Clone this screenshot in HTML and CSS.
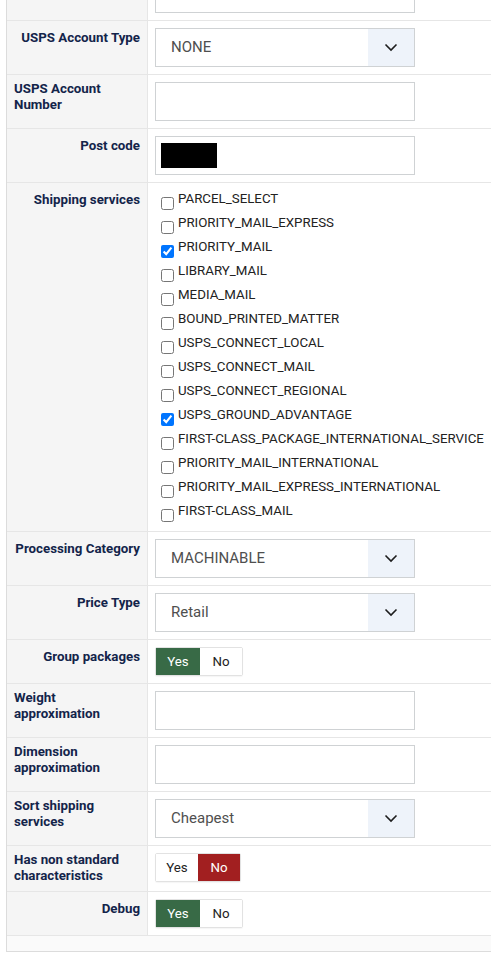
FILE: index.html
```html
<!DOCTYPE html>
<html>
<head>
<meta charset="utf-8">
<link rel="stylesheet" href="styles.css">
</head>
<body>
<div class="panel">
  <div class="row">
    <div class="lbl"></div>
    <div class="val"><div class="input"></div></div>
  </div>
  <div class="row">
    <div class="lbl"><label>USPS Account Type</label></div>
    <div class="val"><div class="select"><span class="sel-text">NONE</span><span class="sel-btn"><svg width="14" height="9" viewBox="0 0 14 9"><path d="M1.5 1.5 L7 7 L12.5 1.5" fill="none" stroke="#1d1d1d" stroke-width="1.6"/></svg></span></div></div>
  </div>
  <div class="row">
    <div class="lbl"><label>USPS Account Number</label></div>
    <div class="val"><div class="input"></div></div>
  </div>
  <div class="row">
    <div class="lbl"><label>Post code</label></div>
    <div class="val"><div class="input"><span class="redact"></span></div></div>
  </div>
  <div class="row">
    <div class="lbl"><label>Shipping services</label></div>
    <div class="val list">
      <label class="chk"><input type="checkbox"><span>PARCEL_SELECT</span></label>
      <label class="chk"><input type="checkbox"><span>PRIORITY_MAIL_EXPRESS</span></label>
      <label class="chk"><input type="checkbox" checked><span>PRIORITY_MAIL</span></label>
      <label class="chk"><input type="checkbox"><span>LIBRARY_MAIL</span></label>
      <label class="chk"><input type="checkbox"><span>MEDIA_MAIL</span></label>
      <label class="chk"><input type="checkbox"><span>BOUND_PRINTED_MATTER</span></label>
      <label class="chk"><input type="checkbox"><span>USPS_CONNECT_LOCAL</span></label>
      <label class="chk"><input type="checkbox"><span>USPS_CONNECT_MAIL</span></label>
      <label class="chk"><input type="checkbox"><span>USPS_CONNECT_REGIONAL</span></label>
      <label class="chk"><input type="checkbox" checked><span>USPS_GROUND_ADVANTAGE</span></label>
      <label class="chk"><input type="checkbox"><span>FIRST-CLASS_PACKAGE_INTERNATIONAL_SERVICE</span></label>
      <label class="chk"><input type="checkbox"><span>PRIORITY_MAIL_INTERNATIONAL</span></label>
      <label class="chk"><input type="checkbox"><span>PRIORITY_MAIL_EXPRESS_INTERNATIONAL</span></label>
      <label class="chk"><input type="checkbox"><span>FIRST-CLASS_MAIL</span></label>
    </div>
  </div>
  <div class="row">
    <div class="lbl"><label>Processing Category</label></div>
    <div class="val"><div class="select"><span class="sel-text">MACHINABLE</span><span class="sel-btn"><svg width="14" height="9" viewBox="0 0 14 9"><path d="M1.5 1.5 L7 7 L12.5 1.5" fill="none" stroke="#1d1d1d" stroke-width="1.6"/></svg></span></div></div>
  </div>
  <div class="row">
    <div class="lbl"><label>Price Type</label></div>
    <div class="val"><div class="select"><span class="sel-text">Retail</span><span class="sel-btn"><svg width="14" height="9" viewBox="0 0 14 9"><path d="M1.5 1.5 L7 7 L12.5 1.5" fill="none" stroke="#1d1d1d" stroke-width="1.6"/></svg></span></div></div>
  </div>
  <div class="row">
    <div class="lbl"><label>Group packages</label></div>
    <div class="val"><div class="toggle"><span class="opt yes-on">Yes</span><span class="opt">No</span></div></div>
  </div>
  <div class="row">
    <div class="lbl"><label>Weight approximation</label></div>
    <div class="val"><div class="input"></div></div>
  </div>
  <div class="row">
    <div class="lbl"><label>Dimension approximation</label></div>
    <div class="val"><div class="input"></div></div>
  </div>
  <div class="row">
    <div class="lbl"><label>Sort shipping services</label></div>
    <div class="val"><div class="select"><span class="sel-text">Cheapest</span><span class="sel-btn"><svg width="14" height="9" viewBox="0 0 14 9"><path d="M1.5 1.5 L7 7 L12.5 1.5" fill="none" stroke="#1d1d1d" stroke-width="1.6"/></svg></span></div></div>
  </div>
  <div class="row">
    <div class="lbl"><label>Has non standard characteristics</label></div>
    <div class="val"><div class="toggle"><span class="opt">Yes</span><span class="opt no-on">No</span></div></div>
  </div>
  <div class="row">
    <div class="lbl"><label>Debug</label></div>
    <div class="val"><div class="toggle"><span class="opt yes-on">Yes</span><span class="opt">No</span></div></div>
  </div>
  <div class="footer"></div>
</div>
</body>
</html>
```

FILE: styles.css
```css
html, body {
  margin: 0;
  padding: 0;
  background: #fff;
  overflow: hidden;
}
body {
  font-family: Roboto, "Liberation Sans", Arial, sans-serif;
}
.panel {
  margin-top: -33px;
  margin-left: 6px;
  width: 485px;
  border-left: 1px solid #dcdcdc;
  border-bottom: 1px solid #dcdcdc;
}
.row {
  display: grid;
  grid-template-columns: 141px 1fr;
  border-bottom: 1px solid #e6e6e6;
}
.lbl {
  background: #f5f5f5;
  border-right: 1px solid #e6e6e6;
  padding: 6px 7px 7px 7px;
  text-align: right;
}
.lbl label {
  display: inline-block;
  text-align: left;
  font-weight: 700;
  font-size: 13.3px;
  line-height: 16px;
  color: #13244a;
}
.val {
  padding: 7px;
  background: #fff;
}
.input {
  width: 258px;
  height: 37px;
  border: 1px solid #cfd2d4;
  background: #fff;
  display: flex;
  align-items: center;
  overflow: hidden;
}
.redact {
  display: block;
  width: 56px;
  height: 25px;
  background: #000;
  margin-left: 5px;
}
.select {
  width: 258px;
  height: 37px;
  border: 1px solid #cfd2d4;
  display: flex;
  background: #fff;
}
.sel-text {
  flex: 1;
  padding-left: 15px;
  font-size: 15px;
  color: #4f4f4f;
  line-height: 37px;
}
.sel-btn {
  width: 46px;
  background: #eef3fa;
  display: flex;
  align-items: center;
  justify-content: center;
}
.list {
  padding: 3px 7px 9px 7px;
}
.chk {
  display: flex;
  align-items: center;
  height: 24px;
  font-size: 13.3px;
  color: #222;
}
.chk input {
  width: 13px;
  height: 13px;
  margin: 10px 4px 0 6px;
}
.toggle {
  display: inline-flex;
  border: 1px solid #e2e2e2;
  border-radius: 2px;
  height: 27px;
  box-shadow: 0 1px 1px rgba(0,0,0,0.04);
}
.opt {
  display: flex;
  align-items: center;
  justify-content: center;
  width: 42px;
  font-size: 13.3px;
  color: #222;
  background: #fff;
}
.opt.yes-on {
  width: 44px;
  background: #386a46;
  color: #fff;
}
.opt.no-on {
  width: 42px;
  background: #a21f20;
  color: #fff;
}
.footer {
  height: 15px;
  background: #fafafa;
}
```
